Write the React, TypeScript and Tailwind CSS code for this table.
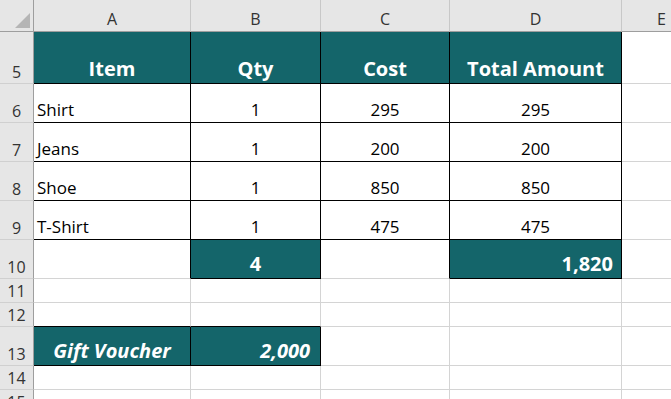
import React from "react";

const TEAL = "bg-[#14656a]";

type CellProps = {
  cls: string;
  children?: React.ReactNode;
};

function Cell({ cls, children }: CellProps) {
  return <div className={"flex items-end overflow-hidden whitespace-nowrap " + cls}>{children}</div>;
}

const rowH = ["h-[52px]", "h-[39px]", "h-[39px]", "h-[39px]", "h-[39px]", "h-[39px]", "h-[24px]", "h-[24px]", "h-[39px]", "h-[24px]", "h-[24px]"];
const rowNums = ["5", "6", "7", "8", "9", "10", "11", "12", "13", "14", "15"];

const G = "border-r border-b border-r-[#d4d4d4] border-b-[#d4d4d4] bg-white";
const BLK = "border-r border-b border-r-black border-b-black";
const head = "justify-center pb-[4px] text-[20px] font-bold text-white leading-none";
const dataL = "justify-start pl-[3px] pb-[4px] text-[17px] text-black leading-none";
const dataC = "justify-center pb-[4px] text-[17px] text-black leading-none";

export default function App() {
  const body: React.ReactNode[][] = [
    [
      <Cell key="a" cls={`${TEAL} ${BLK} ${head}`}>Item</Cell>,
      <Cell key="b" cls={`${TEAL} ${BLK} ${head}`}>Qty</Cell>,
      <Cell key="c" cls={`${TEAL} ${BLK} ${head}`}>Cost</Cell>,
      <Cell key="d" cls={`${TEAL} ${BLK} ${head}`}>Total Amount</Cell>,
      <Cell key="e" cls={G} />,
    ],
    ...[
      ["Shirt", "1", "295", "295"],
      ["Jeans", "1", "200", "200"],
      ["Shoe", "1", "850", "850"],
      ["T-Shirt", "1", "475", "475"],
    ].map((r) => [
      <Cell key="a" cls={`bg-white ${BLK} ${dataL}`}>{r[0]}</Cell>,
      <Cell key="b" cls={`bg-white ${BLK} ${dataC}`}>{r[1]}</Cell>,
      <Cell key="c" cls={`bg-white ${BLK} ${dataC}`}>{r[2]}</Cell>,
      <Cell key="d" cls={`bg-white ${BLK} ${dataC}`}>{r[3]}</Cell>,
      <Cell key="e" cls={G} />,
    ]),
    [
      <Cell key="a" cls="bg-white border-r border-b border-r-black border-b-[#d4d4d4]" />,
      <Cell key="b" cls={`${TEAL} ${BLK} ${head}`}>4</Cell>,
      <Cell key="c" cls="bg-white border-r border-b border-r-black border-b-[#d4d4d4]" />,
      <Cell key="d" cls={`${TEAL} ${BLK} justify-end pr-[8px] pb-[4px] text-[20px] font-bold text-white leading-none`}>1,820</Cell>,
      <Cell key="e" cls={G} />,
    ],
    [<Cell key="a" cls={G} />, <Cell key="b" cls={G} />, <Cell key="c" cls={G} />, <Cell key="d" cls={G} />, <Cell key="e" cls={G} />],
    [
      <Cell key="a" cls="bg-white border-r border-b border-r-[#d4d4d4] border-b-black" />,
      <Cell key="b" cls="bg-white border-r border-b border-r-[#d4d4d4] border-b-black" />,
      <Cell key="c" cls={G} />,
      <Cell key="d" cls={G} />,
      <Cell key="e" cls={G} />,
    ],
    [
      <Cell key="a" cls={`${TEAL} ${BLK} ${head} italic`}>Gift Voucher</Cell>,
      <Cell key="b" cls={`${TEAL} ${BLK} justify-end pr-[10px] pb-[4px] text-[20px] font-bold italic text-white leading-none`}>2,000</Cell>,
      <Cell key="c" cls={G} />,
      <Cell key="d" cls={G} />,
      <Cell key="e" cls={G} />,
    ],
    [<Cell key="a" cls={G} />, <Cell key="b" cls={G} />, <Cell key="c" cls={G} />, <Cell key="d" cls={G} />, <Cell key="e" cls={G} />],
    [<Cell key="a" cls={G} />, <Cell key="b" cls={G} />, <Cell key="c" cls={G} />, <Cell key="d" cls={G} />, <Cell key="e" cls={G} />],
  ];

  const colHead = "bg-[#e6e6e6] border-r border-b border-r-[#c8c8c8] border-b-[#9e9e9e] justify-center pb-[4px] text-[16px] text-[#333] leading-none";

  return (
    <div
      className="w-[671px] h-[399px] overflow-hidden bg-white"
      style={{ fontFamily: "'Open Sans', Lato, sans-serif" }}
    >
      <div className="grid grid-cols-[34px_157px_130px_129px_172px_80px]">
        <div className="h-[32px] bg-[#e6e6e6] border-r border-b border-r-[#9e9e9e] border-b-[#9e9e9e] flex items-end justify-end pr-[3px] pb-[3px]">
          <svg width="15" height="15" viewBox="0 0 15 15">
            <polygon points="15,0 15,15 0,15" fill="#b5b5b5" />
          </svg>
        </div>
        {["A", "B", "C", "D", "E"].map((l) => (
          <Cell key={l} cls={`h-[32px] ${colHead}`}>{l}</Cell>
        ))}
        {rowNums.map((n, i) => (
          <React.Fragment key={n}>
            <Cell cls={`${rowH[i]} bg-[#e6e6e6] border-r border-b border-r-[#9e9e9e] border-b-[#d0d0d0] justify-center pb-[3px] text-[16px] text-[#333] leading-none`}>
              {n}
            </Cell>
            {body[i].map((c, j) => (
              <div key={j} className={`${rowH[i]} flex`}>
                {React.cloneElement(c as React.ReactElement<CellProps>, {
                  cls: ((c as React.ReactElement<CellProps>).props.cls) + " flex-1",
                })}
              </div>
            ))}
          </React.Fragment>
        ))}
      </div>
    </div>
  );
}
